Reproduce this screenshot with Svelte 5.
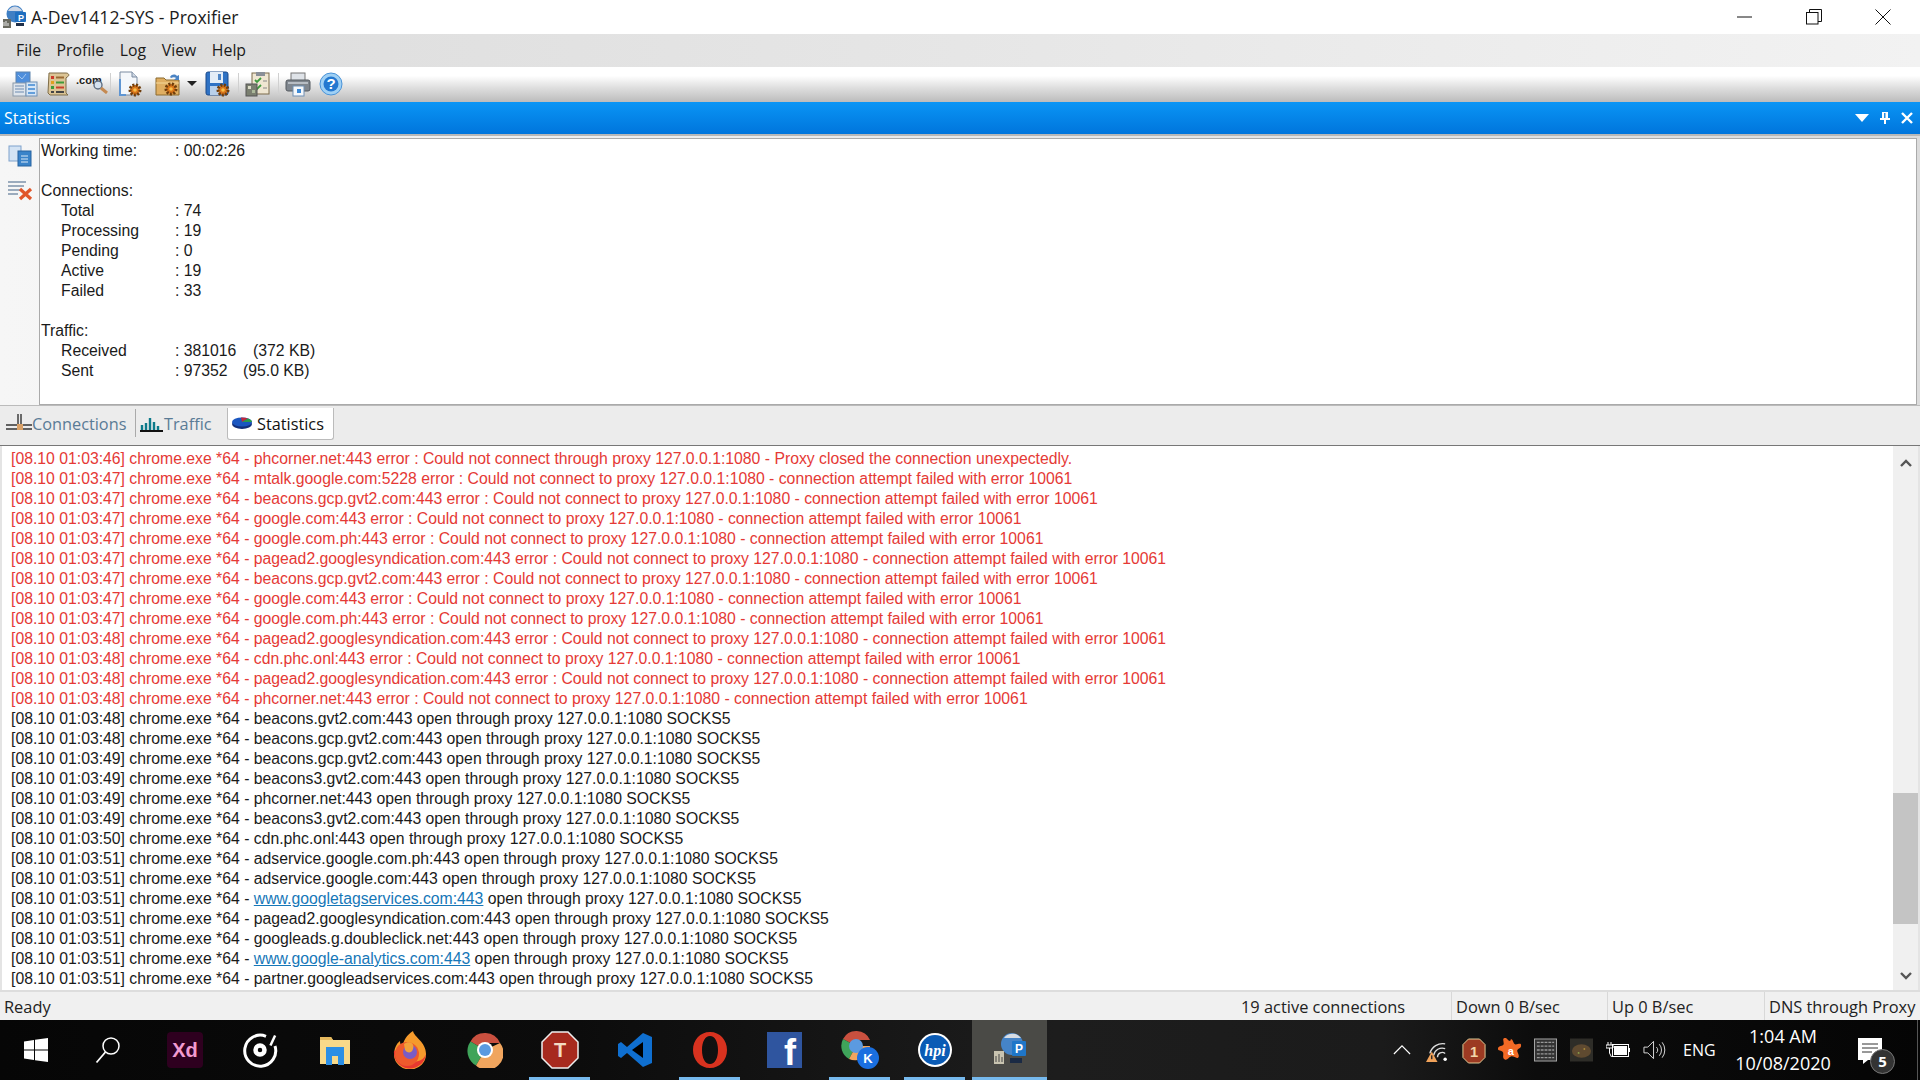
<script>
  const ip = '127.0.0.1:1080';
  const fail = (t, host, tail = 'connection attempt failed with error 10061') =>
    `[08.10 01:03:${t}] chrome.exe *64 - ${host} error : Could not connect to proxy ${ip} - ${tail}`;
  const ok = (t, host) => ({ pre: `[08.10 01:03:${t}] chrome.exe *64 - ${host} open through proxy ${ip} SOCKS5` });
  const errors = [
    `[08.10 01:03:46] chrome.exe *64 - phcorner.net:443 error : Could not connect through proxy ${ip} - Proxy closed the connection unexpectedly.`,
    fail(47, 'mtalk.google.com:5228'),
    fail(47, 'beacons.gcp.gvt2.com:443'),
    fail(47, 'google.com:443'),
    fail(47, 'google.com.ph:443'),
    fail(47, 'pagead2.googlesyndication.com:443'),
    fail(47, 'beacons.gcp.gvt2.com:443'),
    fail(47, 'google.com:443'),
    fail(47, 'google.com.ph:443'),
    fail(48, 'pagead2.googlesyndication.com:443'),
    fail(48, 'cdn.phc.onl:443'),
    fail(48, 'pagead2.googlesyndication.com:443'),
    fail(48, 'phcorner.net:443')
  ];
  const oks = [
    ok(48, 'beacons.gvt2.com:443'),
    ok(48, 'beacons.gcp.gvt2.com:443'),
    ok(49, 'beacons.gcp.gvt2.com:443'),
    ok(49, 'beacons3.gvt2.com:443'),
    ok(49, 'phcorner.net:443'),
    ok(49, 'beacons3.gvt2.com:443'),
    ok(50, 'cdn.phc.onl:443'),
    ok(51, 'adservice.google.com.ph:443'),
    ok(51, 'adservice.google.com:443'),
    { pre: '[08.10 01:03:51] chrome.exe *64 - ', link: 'www.googletagservices.com:443', post: ` open through proxy ${ip} SOCKS5` },
    ok(51, 'pagead2.googlesyndication.com:443'),
    ok(51, 'googleads.g.doubleclick.net:443'),
    { pre: '[08.10 01:03:51] chrome.exe *64 - ', link: 'www.google-analytics.com:443', post: ` open through proxy ${ip} SOCKS5` },
    ok(51, 'partner.googleadservices.com:443')
  ];
  const conn = [['Total', '74'], ['Processing', '19'], ['Pending', '0'], ['Active', '19'], ['Failed', '33']];
</script>

{#snippet gear(cx, cy)}
  <circle cx={cx} cy={cy} r="5" fill="#d9751b" stroke="#6e3d0c" stroke-dasharray="2 1.400" stroke-width="3"/>
  <circle cx={cx} cy={cy} r="1.800" fill="#f7c04a"/>
{/snippet}

<div class="win">
  <header class="title">
    <svg class="appicon" viewBox="0 0 26 24" width="26" height="24">
      <circle cx="14" cy="9" r="8.500" fill="#3f7fc4"/><path d="M7 6c3-6 11-6 14 0z" fill="#cfd8e6"/>
      <rect x="14" y="7" width="11" height="10" rx="1" fill="#1f6fc0"/><text x="17" y="15.500" class="p">P</text>
      <rect x="2" y="14" width="8" height="9" fill="#6a6a60"/><path d="M3 21v-4M5 21v-5M7 21v-3" stroke="#eee"/>
      <rect x="15" y="18" width="8" height="3" fill="#20304a"/>
    </svg>
    <span class="title-text">A-Dev1412-SYS - Proxifier</span>
    <div class="winctl">
      <span class="ctl"><svg viewBox="0 0 16 16" width="16" height="16"><path d="M0 8h15" stroke="#111"/></svg></span>
      <span class="ctl"><svg viewBox="0 0 16 16" width="16" height="16" fill="none" stroke="#111"><rect x=".5" y="3.500" width="11.500" height="11.500"/><path d="M3.500 3.500V.5H15.500V12.500H12"/></svg></span>
      <span class="ctl"><svg viewBox="0 0 16 16" width="16" height="16"><path d="M.5.5l15 15M15.500.5l-15 15" stroke="#111" fill="none"/></svg></span>
    </div>
  </header>

  <nav class="menu">
    <span>File</span><span>Profile</span><span>Log</span><span>View</span><span>Help</span>
  </nav>

  <div class="toolbar">
    <svg class="tb" viewBox="0 0 26 26"><rect x="4" y="1" width="14" height="12" fill="#4f8fdc" stroke="#5d83ad"/><path d="M6 4l4 4 4-5" stroke="#a6c9ef" fill="none"/><rect x="1" y="12" width="13" height="13" fill="#dfe5ec" stroke="#8a99aa"/><path d="M3 15h9M3 18h9M3 21h9" stroke="#6c8bb0"/><rect x="14" y="11" width="11" height="14" fill="#d6e6f6" stroke="#6e8fb4"/><path d="M16 14h7M16 18h7M16 22h7" stroke="#3f88d2" stroke-width="1.400"/></svg>
    <svg class="tb" viewBox="0 0 26 26"><path d="M4 2h17c3 0 4 3 1 4l-1 1v15l2 2H5l-2-2z" fill="#dcc596" stroke="#7f6d48"/><rect x="6" y="5" width="3" height="3" fill="#cc3a2a"/><path d="M11 6.500h8" stroke="#9a6a34" stroke-width="2"/><rect x="6" y="10" width="3" height="3" fill="#e0a020"/><path d="M11 11.500h8" stroke="#3f9a3a" stroke-width="2"/><rect x="6" y="15" width="3" height="3" fill="#3a9a3a"/><path d="M11 16.500h8" stroke="#c8412c" stroke-width="2"/><rect x="6" y="20" width="3" height="2" fill="#444"/><path d="M11 21h8" stroke="#444" stroke-width="2"/></svg>
    <span class="com"><span>.com</span><svg viewBox="0 0 16 14" width="16" height="14"><circle cx="6" cy="5" r="4" fill="#d5e2f0" stroke="#5e6d80" stroke-width="1.400"/><path d="M9 8l6 5" stroke="#c58a52" stroke-width="3"/></svg></span>
    <i class="sep"></i>
    <svg class="tb" viewBox="0 0 26 26"><path d="M3 1h12l5 5v18H3z" fill="#f4f7fb" stroke="#7b8ba1"/><path d="M15 1v5h5" fill="#cfd8e4" stroke="#7b8ba1"/><path d="M3 8v16h6" fill="none" stroke="#5f95d2" stroke-width="2"/>{@render gear(18, 19)}</svg>
    <svg class="tb wide" viewBox="0 0 26 26"><path d="M1 7h8l2 2h13v15H1z" fill="#dfae62" stroke="#8b6a2e"/><path d="M1 12h23" stroke="#f4d99b"/><path d="M15 6c2-3 5-3 7-1l2-1v5h-5l2-2c-1-1-3-1-5 0z" fill="#4b84c4"/>{@render gear(16, 18)}</svg>
    <span class="drop"></span>
    <svg class="tb" viewBox="0 0 26 26"><rect x="1" y="1" width="22" height="23" rx="2" fill="#2f72c4" stroke="#1c4a8a"/><rect x="5" y="1" width="13" height="11" fill="#e4edf7"/><rect x="13" y="3" width="3" height="6" fill="#4f86c6"/><rect x="5" y="15" width="10" height="9" fill="#b9d0ea"/>{@render gear(18, 19)}</svg>
    <i class="sep"></i>
    <svg class="tb" viewBox="0 0 26 26"><rect x="7" y="2" width="17" height="21" fill="#efe6d2" stroke="#7b6a4a"/><rect x="11" y="1" width="9" height="4" fill="#8a8f98"/><path d="M10 9l2 2 4-4M10 16l2 2 4-4" stroke="#3d9a3d" fill="none" stroke-width="1.800"/><path d="M18 10h4M18 17h4" stroke="#888"/><rect x="1" y="13" width="11" height="12" fill="#7a7f70" stroke="#555"/><rect x="3" y="15" width="3" height="3" fill="#dcdcc8"/><rect x="7" y="19" width="3" height="3" fill="#aab89a"/></svg>
    <i class="sep"></i>
    <svg class="tb" viewBox="0 0 26 26"><rect x="6" y="2" width="14" height="8" fill="#dfe3e8" stroke="#777"/><rect x="1" y="9" width="24" height="11" rx="2" fill="#7f868e" stroke="#555a61"/><rect x="3" y="11" width="20" height="2" fill="#b7bdc4"/><rect x="8" y="15" width="11" height="10" fill="#f5f8fb" stroke="#6f8fb4"/><rect x="12" y="18" width="4" height="4" fill="#3d8ad6"/></svg>
    <svg class="tb help" viewBox="0 0 24 24"><circle cx="12" cy="12" r="11" fill="#9fd0f4" stroke="#4a93d8"/><circle cx="12" cy="12" r="7.500" fill="#2478d0"/><text x="12" y="17" class="q">?</text></svg>
  </div>

  <div class="dockhead">
    <span>Statistics</span>
    <div class="dockctl">
      <svg viewBox="0 0 14 8" width="14" height="8"><path d="M0 0h14L7 8z" fill="#fff"/></svg>
      <svg viewBox="0 0 10 12" width="10" height="12"><path d="M2 0h6v6h2v2H6v4H4V8H0V6h2z" fill="#fff"/><rect x="4" y="1" width="1.500" height="5" fill="#2a8fe0"/></svg>
      <svg viewBox="0 0 12 12" width="12" height="12"><path d="M1 1l10 10M11 1L1 11" stroke="#fff" stroke-width="2.400"/></svg>
    </div>
  </div>

  <section class="stats">
    <aside class="side">
      <svg viewBox="0 0 24 22" width="24" height="22"><rect x="1" y="1" width="12" height="15" fill="#d3e3f4" stroke="#7fa2cc"/><rect x="10" y="6" width="13" height="15" fill="#3a83c9" stroke="#26639f"/><path d="M13 11h7M13 14h7M13 17h7" stroke="#dbe9f7"/></svg>
      <svg viewBox="0 0 26 22" width="26" height="22"><path d="M1 3h18M1 7h16M1 11h12M1 15h10" stroke="#7d93ab" stroke-width="1.600"/><path d="M13 10l11 10M24 10L13 20" stroke="#e0562a" stroke-width="3.200"/></svg>
    </aside>
    <div class="statbody">
      <div class="row"><span>Working time:</span><span>: 00:02:26</span></div>
      <div class="row"></div>
      <div class="row"><span>Connections:</span></div>
      {#each conn as [k, v]}
        <div class="row in"><span>{k}</span><span>: {v}</span></div>
      {/each}
      <div class="row"></div>
      <div class="row"><span>Traffic:</span></div>
      <div class="row in"><span>Received</span><span class="val"><span class="num">: 381016</span><span>(372 KB)</span></span></div>
      <div class="row in"><span>Sent</span><span class="val"><span class="num short">: 97352</span><span>(95.0 KB)</span></span></div>
    </div>
  </section>

  <div class="tabs">
    <div class="tab conn">
      <svg viewBox="0 0 26 22" width="26" height="22"><path d="M0 12h26M0 16h26" stroke="#333" stroke-width="1.400"/><path d="M12 1v12M15 1v12" stroke="#333" stroke-width="1.400"/><rect x="11" y="11" width="6" height="6" fill="#d9a066"/></svg>
      <span>Connections</span>
    </div>
    <i class="tabsep"></i>
    <div class="tab traf">
      <svg viewBox="0 0 24 16" width="24" height="16"><path d="M1 15h23" stroke="#111" stroke-width="2"/><path d="M3 14V9M7 14V7M11 14V2M15 14V6M19 14V10" stroke="#0d7a8a" stroke-width="2.400"/></svg>
      <span>Traffic</span>
    </div>
    <div class="tab active">
      <svg viewBox="0 0 20 12" width="20" height="12"><ellipse cx="10" cy="7" rx="10" ry="5" fill="#122f7a"/><ellipse cx="10" cy="5" rx="10" ry="4.500" fill="#1a56c0"/><path d="M10 5l-1-4.500a10 4.500 0 0 1 7 1z" fill="#c0283a"/><path d="M10 5l6-3.500a10 4.500 0 0 1 4 3.500z" fill="#2a9a4a"/></svg>
      <span>Statistics</span>
    </div>
  </div>

  <section class="logwrap">
    <div class="log">
      {#each errors as l}
        <div class="line err">{l}</div>
      {/each}
      {#each oks as l}
        <div class="line">{l.pre}{#if l.link}<a href="#top">{l.link}</a>{l.post}{/if}</div>
      {/each}
    </div>
    <div class="sb">
      <svg viewBox="0 0 12 8" width="12" height="8"><path d="M1 7l5-5 5 5" fill="none" stroke="#555" stroke-width="2.400"/></svg>
      <div class="track"><div class="thumb"></div></div>
      <svg viewBox="0 0 12 8" width="12" height="8"><path d="M1 1l5 5 5-5" fill="none" stroke="#555" stroke-width="2.400"/></svg>
    </div>
  </section>

  <footer class="status">
    <span class="ready">Ready</span>
    <span class="cell c1">19 active connections</span>
    <span class="cell c2">Down 0 B/sec</span>
    <span class="cell c3">Up 0 B/sec</span>
    <span class="cell c4">DNS through Proxy</span>
  </footer>

  <div class="taskbar">
    <div class="tk start"><svg viewBox="0 0 24 24" width="24" height="24"><path d="M0 3.400l10-1.400v9.500H0zM11 1.800L24 0v11.500H11zM0 12.500h10V22L0 20.600zM11 12.500h13V24l-13-1.800z" fill="#fff"/></svg></div>
    <div class="tk start"><svg viewBox="0 0 26 28" width="26" height="28"><circle cx="16" cy="10" r="8" fill="none" stroke="#fff" stroke-width="1.500"/><path d="M10.500 16L1.500 26.500" stroke="#fff" stroke-width="1.800"/></svg></div>
    <div class="apps">
      <div class="tk"><svg viewBox="0 0 36 36" width="36" height="36"><rect width="36" height="36" rx="4" fill="#2e001f"/><text x="18" y="25" class="xd">Xd</text></svg></div>
      <div class="tk"><svg viewBox="0 0 36 36" width="36" height="36" fill="none" stroke="#fff"><path d="M24 4.300A15.500 15.500 0 1 0 33 14" stroke-width="3"/><circle cx="18" cy="18" r="4.500" stroke-width="4.500"/><path d="M31 3v11" stroke-width="2.500" transform="rotate(25 31 8)"/></svg></div>
      <div class="tk"><svg viewBox="0 0 32 32" width="32" height="32"><path d="M1 3h11l2 3h17v24H1z" fill="#f8d98a"/><path d="M1 3h11l2 3H1z" fill="#e5b95e"/><path d="M7 31V13h18v18h-6v-9h-6v9z" fill="#2c8fe5"/></svg></div>
      <div class="tk"><svg viewBox="0 0 36 38" width="36" height="38"><path d="M21 0c1 6 13 11 13 23a16 15 0 0 1-32 1c0-6 2-11 6-14 0 3 1 5 3 6 0-7 4-12 10-16z" fill="#f59a2c"/><path d="M2 20a16 16 0 0 0 32 3c-2 6-8 8-14 8-8 0-12-5-14-12z" fill="#e8392f"/><circle cx="15" cy="23" r="12" fill="#ee5a2c"/><circle cx="18" cy="21" r="7" fill="#7a5cc4"/><path d="M12 13c5-4 11-1 9 5s-7 3-8 1" fill="#f2a13a"/></svg></div>
      <div class="tk"><svg viewBox="0 0 36 36" width="36" height="36"><path d="M18 18L3.500 9.500A16.500 16.500 0 0 1 33 11H18z" fill="#c9503f"/><path d="M18 18L9 33.500A16.500 16.500 0 0 1 3.500 9.500z" fill="#3fa45a"/><path d="M18 18L33 11A16.500 16.500 0 0 1 9 33.500z" fill="#f0a55e"/><circle cx="18" cy="18" r="8" fill="#fff"/><circle cx="18" cy="18" r="6" fill="#5b9ae0"/></svg></div>
      <div class="tk on"><svg viewBox="0 0 38 38" width="38" height="38"><path d="M11 1h16l10 10v16L27 37H11L1 27V11z" fill="#a72a1e" stroke="#eee" stroke-width="1.500"/><text x="19" y="26" class="t">T</text></svg></div>
      <div class="tk"><svg viewBox="0 0 36 36" width="36" height="36"><path d="M26 1l9 4v26l-9 4L10 21l-6 5-3-2v-12l3-2 6 5z" fill="#0f6fd0"/><path d="M26 10L15 18l11 8z" fill="#000"/></svg></div>
      <div class="tk on"><svg viewBox="0 0 34 36" width="34" height="36"><path fill-rule="evenodd" d="M17 0c10 0 17 8 17 18s-7 18-17 18S0 28 0 18 7 0 17 0zm0 4c-5 0-8 6-8 14s3 14 8 14 8-6 8-14-3-14-8-14z" fill="#d8321f"/></svg></div>
      <div class="tk"><div class="fb">f</div></div>
      <div class="tk on"><svg viewBox="0 0 38 38" width="38" height="38"><path d="M15 15L2 8A15 15 0 0 1 29 9H15z" fill="#c9503f"/><path d="M15 15L8 28A15 15 0 0 1 2 8z" fill="#3fa45a"/><path d="M15 15H29A15 15 0 0 1 8 28z" fill="#f0a55e"/><circle cx="15" cy="15" r="7" fill="#5b9ae0"/><circle cx="27" cy="27" r="11" fill="#1a6fe0"/><text x="27" y="32" class="k">K</text></svg></div>
      <div class="tk on"><svg viewBox="0 0 36 36" width="36" height="36"><circle cx="18" cy="18" r="17" fill="#fff"/><circle cx="18" cy="18" r="15" fill="#0a5bb5"/><text x="18" y="24" class="hpi">hpi</text></svg></div>
      <div class="tk cur on"><svg viewBox="0 0 36 36" width="36" height="36"><circle cx="20" cy="12" r="11" fill="#4584c8"/><path d="M12 6c4-6 14-5 17 0z" fill="#d7dde5"/><rect x="20" y="9" width="14" height="15" rx="1" fill="#1f76c8"/><text x="27" y="21" class="p2">P</text><rect x="2" y="19" width="10" height="13" fill="#c9c4b0"/><path d="M4 30v-6M7 30v-8M10 30v-5" stroke="#444"/><rect x="18" y="26" width="12" height="5" fill="#1a2a44"/></svg></div>
    </div>
    <div class="tray">
      <svg class="t1" viewBox="0 0 20 12" width="18" height="11"><path d="M1 11l9-9 9 9" fill="none" stroke="#fff" stroke-width="1.300"/></svg>
      <svg class="t2" viewBox="0 0 24 24" width="23" height="23"><path d="M4 14A14 14 0 0 1 20 4M8 16A9 9 0 0 1 20 9M12 18A5 5 0 0 1 20 14" fill="none" stroke="#ddd" stroke-width="1.400"/><circle cx="20" cy="20" r="1.800" fill="#fff"/><path d="M6 12l6 11H0z" fill="#f0a25a"/><rect x="5.300" y="16" width="1.400" height="4" fill="#222"/></svg>
      <svg class="t3" viewBox="0 0 26 28" width="24" height="26"><path d="M7 1h12l6 6v14l-6 6H7l-6-6V7z" fill="#9c3a22" stroke="#e8d8a0"/><text x="13" y="20" class="one">1</text></svg>
      <svg class="t4" viewBox="0 0 26 26" width="24" height="24"><path d="M14 1c3 1 2 5 5 6 3 0 6-2 6 1s-3 3-4 5 3 6 1 8-5-2-8-1-4 5-7 3 0-6-2-8-6-1-5-4 5-2 6-4-2-6 1-7 4 4 6 3 0-3 1-2z" fill="#f26a25"/><text x="14" y="18" class="a">a</text></svg>
      <svg class="t5" viewBox="0 0 24 24" width="23" height="24"><rect x=".5" y=".5" width="23" height="23" fill="#333" stroke="#aaa"/><path d="M3 4h18M3 8h18M3 12h18M3 16h18M3 20h18" stroke="#999" stroke-width="1.400" stroke-dasharray="3 1"/></svg>
      <svg class="t6" viewBox="0 0 24 24" width="23" height="24"><rect width="24" height="24" fill="#2e2d28"/><ellipse cx="12" cy="13" rx="10" ry="7" fill="#5f4a30"/><circle cx="15" cy="11" r="1" fill="#a88a3a"/><circle cx="9" cy="15" r="1" fill="#8aa04a"/></svg>
      <svg class="t7" viewBox="0 0 24 17" width="24" height="17"><path d="M2 1v3M5 1v3M0 4h7v3H0zM3.500 7v5l2 4" stroke="#fff" fill="none"/><rect x="6.500" y="3.500" width="16" height="12" fill="none" stroke="#fff"/><rect x="8" y="5" width="13" height="9" fill="#fff"/><rect x="23" y="7" width="1" height="4" fill="#fff"/></svg>
      <svg class="t8" viewBox="0 0 24 20" width="23" height="20" fill="none" stroke="#ddd"><path d="M1 7h4l6-6v18l-6-6H1z"/><path d="M14 7a4 4 0 0 1 0 6M17 4a9 9 0 0 1 0 12M20 2a13 13 0 0 1 0 16" /></svg>
      <span class="eng">ENG</span>
      <span class="clock"><span>1:04 AM</span><span>10/08/2020</span></span>
      <span class="note">
        <svg viewBox="0 0 24 26" width="24" height="26"><path d="M0 0h24v22H10l-5 4v-4H0z" fill="#fff"/><path d="M4 6h16M4 10h16M4 14h10" stroke="#333"/></svg>
        <b>5</b>
      </span>
      <i class="edge"></i>
    </div>
  </div>
</div>

<style>
  :global(body) { margin: 0; background: #fff; overflow: hidden; }
  .win { width: 1920px; height: 1080px; display: flex; flex-direction: column; font-family: "Open Sans", "Noto Sans", sans-serif; color: #222; overflow: hidden; }

  .title { height: 34px; flex: none; display: flex; align-items: center; background: #fff; padding-left: 1px; }
  .appicon { flex: none; margin-right: 4px; }
  .appicon .p { font: bold 9px "Liberation Sans", sans-serif; fill: #fff; }
  .title-text { font-size: 17.6px; color: #1c1c1c; }
  .winctl { margin-left: auto; display: flex; padding-right: 3px; }
  .ctl { width: 69px; height: 34px; display: flex; align-items: center; justify-content: center; }

  .menu { height: 33px; flex: none; box-sizing: border-box; padding: 0 0 2px 16px; display: flex; align-items: center; gap: 15.6px; font-size: 15.8px; color: #1a1a1a; background: linear-gradient(90deg, #dcdcdc, #e6e6e6 50%, #f2f2f2); }

  .toolbar { height: 35px; flex: none; display: flex; align-items: center; box-sizing: border-box; padding: 0 0 2px 12px; background: linear-gradient(#fff 25%, #dedede 60%, #bcbcbc 100%); }
  .tb { width: 26px; height: 26px; flex: none; margin-right: 7px; }
  .tb.wide { margin: 0 1px 0 5px; }
  .tb.help { width: 24px; height: 24px; margin-left: 1px; }
  .help .q { font: bold 15px "Liberation Sans", sans-serif; fill: #fff; text-anchor: middle; }
  .com { width: 26px; margin-right: 6px; position: relative; font: bold 11px "Liberation Sans", sans-serif; color: #222; height: 26px; flex: none; }
  .com span { position: absolute; left: -2px; top: 3px; }
  .com svg { position: absolute; right: -4px; bottom: 3px; }
  .sep { width: 1px; height: 22px; background: #d0d0d0; flex: none; margin-right: 6px; }
  .drop { width: 0; height: 0; border: 5px solid transparent; border-top: 5px solid #222; border-bottom: 0; margin: 0 8px 0 5px; flex: none; }

  .dockhead { height: 32px; flex: none; display: flex; align-items: center; padding-left: 4px; color: #fff; font-size: 16px; background: linear-gradient(#0a95f5, #0075dc); }
  .dockctl { margin-left: auto; display: flex; align-items: center; gap: 11px; padding-right: 7px; }

  .stats { height: 272px; flex: none; display: flex; background: linear-gradient(90deg, #f6f6f6, #dcdcdc); border-top: 2px solid #b8b8b8; box-sizing: border-box; border-bottom: 1px solid #bbb; padding-top: 2px; }
  .side { width: 39px; flex: none; display: flex; flex-direction: column; align-items: center; gap: 12px; padding-top: 7px; }
  .statbody { flex: 1; margin-right: 3px; background: #fff; border: 1px solid #aaa; padding-top: 2px; font: 15.78px "Liberation Sans", sans-serif; color: #1a1a1a; }
  .row { height: 20px; line-height: 20px; display: grid; grid-template-columns: 134px 1fr; padding-left: 1px; }
  .row.in { padding-left: 21px; grid-template-columns: 114px 1fr; }
  .val { display: flex; }
  .num { width: 78px; }
  .num.short { width: 68px; }

  .tabs { height: 40px; flex: none; display: flex; align-items: flex-start; background: #ececec; font-size: 16.3px; color: #5a7b96; border-bottom: 1px solid #777; box-sizing: border-box; }
  .tab { display: flex; align-items: center; height: 36px; }
  .tab svg { margin-bottom: 1px; }
  .tab.conn { padding-left: 6px; gap: 0; width: 126px; }
  .tabsep { width: 1px; height: 28px; background: #aaa; margin: 3px 3px 0 3px; flex: none; }
  .tab.traf { gap: 1px; width: 88px; }
  .tab.active { width: 107px; height: 32px; box-sizing: border-box; padding-left: 4px; gap: 5px; background: #fff; color: #111; border: 1px solid #bbb; border-top: 0; border-radius: 0 0 3px 3px; margin-top: 2px; }

  .logwrap { height: 544px; flex: none; display: flex; background: #fff; border-left: 2px solid #e4e4e4; box-sizing: border-box; border-right: 2px solid #e4e4e4; }
  .log { flex: 1; padding: 3px 0 0 9px; font: 15.78px/20px "Liberation Sans", sans-serif; color: #1a1a1a; white-space: nowrap; overflow: hidden; }
  .line { height: 20px; white-space: pre; }
  .err { color: #e53935; }
  .log a { color: #1677b8; text-decoration: underline; }
  .sb { width: 25px; flex: none; background: #f0f0f0; display: flex; flex-direction: column; align-items: center; padding: 13px 0 10px; box-sizing: border-box; }
  .track { flex: 1; align-self: stretch; position: relative; }
  .thumb { position: absolute; left: 0; right: 0; bottom: 48px; height: 131px; background: #c4c4c4; }

  .status { height: 30px; flex: none; display: flex; align-items: center; background: #f0f0f0; border-top: 2px solid #ddd; box-sizing: border-box; font-size: 16.4px; color: #222; }
  .ready { padding-left: 4px; width: 1237px; box-sizing: border-box; }
  .cell { height: 100%; display: flex; align-items: center; box-sizing: border-box; padding-left: 4px; white-space: nowrap; }
  .c1 { width: 214px; }
  .c2 { width: 156px; border-left: 1px solid #d8d8d8; }
  .c3 { width: 157px; border-left: 1px solid #d8d8d8; }
  .c4 { flex: 1; border-left: 1px solid #d8d8d8; }

  .taskbar { height: 60px; flex: none; display: flex; color: #fff; background: linear-gradient(90deg, #060606, #0c0c0c 30%, #1d1d1d 55%, #1b1b1b 72%, #0c0c0c 80%, #050505); }
  .tk { width: 75px; height: 60px; display: flex; align-items: center; justify-content: center; box-sizing: border-box; flex: none; position: relative; }
  .tk.start { width: 72px; }
  .apps { display: flex; margin-left: 3px; }
  .tk.on::after { content: ""; position: absolute; left: 7px; right: 7px; bottom: 0; height: 3px; background: #76b9ed; }
  .tk.cur { background: #4a4a46; }
  .tk.cur::after { left: 0; right: 0; }
  .xd { font: bold 20px "Liberation Sans", sans-serif; fill: #f29bd0; text-anchor: middle; }
  .t { font: bold 20px "Liberation Sans", sans-serif; fill: #f4dcc4; text-anchor: middle; }
  .k { font: bold 13px "Liberation Sans", sans-serif; fill: #fff; text-anchor: middle; }
  .hpi { font: italic bold 16px "Liberation Serif", serif; fill: #fff; text-anchor: middle; }
  .p2 { font: bold 12px "Liberation Sans", sans-serif; fill: #fff; text-anchor: middle; }
  .one { font: bold 16px "Liberation Sans", sans-serif; fill: #f2d6a8; text-anchor: middle; }
  .a { font: bold 12px "Liberation Sans", sans-serif; fill: #fff; text-anchor: middle; }
  .fb { width: 35px; height: 36px; background: #2f559f; font: bold 36px/30px "Liberation Sans", sans-serif; padding: 6px 6px 0 0; text-align: right; box-sizing: border-box; color: #fff; }
  .tray { display: flex; align-items: center; position: relative; flex: 1; }
  .tray > * { position: absolute; }
  .t1 { left: 346px; top: 24px; }
  .t2 { left: 379px; top: 20px; }
  .t3 { left: 415px; top: 18px; }
  .t4 { left: 451px; top: 18px; }
  .t5 { left: 487px; top: 18px; }
  .t6 { left: 523px; top: 18px; }
  .t7 { left: 559px; top: 21px; }
  .t8 { left: 596px; top: 20px; }
  .eng { left: 636px; top: 19px; font-size: 16px; }
  .clock { left: 676px; top: 3px; width: 120px; display: flex; flex-direction: column; align-items: center; font-size: 18px; line-height: 27px; }
  .note { left: 811px; top: 18px; width: 24px; height: 26px; }
  .note svg { position: absolute; left: 0; top: 0; }
  .note b { position: absolute; left: 12px; top: 11px; width: 23px; height: 23px; border-radius: 50%; background: #333; border: 1px solid #777; text-align: center; font-size: 15px; line-height: 23px; }
  .edge { right: 2px; top: 0; bottom: 0; width: 1px; background: #555; }
</style>
